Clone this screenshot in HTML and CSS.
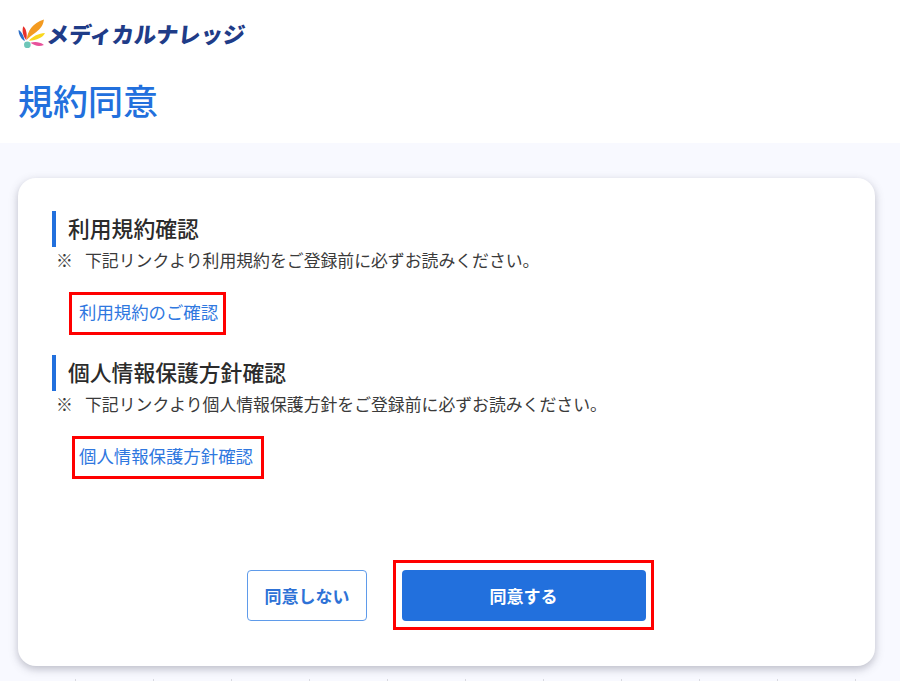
FILE: index.html
```html
<!DOCTYPE html>
<html lang="ja">
<head>
<meta charset="utf-8">
<title>規約同意</title>
<link rel="stylesheet" href="styles.css">
</head>
<body>
<header class="header">
  <div class="logo">
    <svg class="logo-mark" viewBox="0 0 26 28" width="27" height="29" aria-hidden="true">
      <path d="M8.500 20 C9 12 14 4 25 0.500 C24.500 5 23 7 21 9.500 C19 12 14 15 8.500 20Z" fill="#f39a20"/>
      <path d="M10.500 21 C14 16.500 20 14 26 13.500 C24.500 17.500 18 20.500 10.500 21Z" fill="#f9d71c"/>
      <path d="M12 23 C16 21.500 21 22 25 25 C20.500 27 16 26 12 23Z" fill="#e8509a"/>
      <path d="M5 7 C8 9 9 15 8 20.500 C5 17 3.500 12 5 7Z" fill="#e8302a"/>
      <path d="M0.500 10.500 C3 11.500 6 17 6.500 21.500 C3 19 0.500 15 0.500 10.500Z" fill="#2a6cc6"/>
      <circle cx="9" cy="25" r="3.200" fill="#6ec6b8"/>
    </svg>
    <span class="logo-text">メディカルナレッジ</span>
  </div>
  <h1 class="title">規約同意</h1>
</header>
<main class="main">
  <section class="card">
    <div class="block">
      <h2 class="heading">利用規約確認</h2>
      <p class="note"><span class="mark">※</span>下記リンクより利用規約をご登録前に必ずお読みください。</p>
      <div class="link-box link-box-a"><a class="link" href="#">利用規約のご確認</a></div>
    </div>
    <div class="block">
      <h2 class="heading">個人情報保護方針確認</h2>
      <p class="note"><span class="mark">※</span>下記リンクより個人情報保護方針をご登録前に必ずお読みください。</p>
      <div class="link-box link-box-b"><a class="link" href="#">個人情報保護方針確認</a></div>
    </div>
    <div class="actions">
      <button class="btn btn-outline" type="button">同意しない</button>
      <div class="btn-frame"><button class="btn btn-primary" type="button">同意する</button></div>
    </div>
  </section>
</main>
</body>
</html>
```
FILE: styles.css
```css
* { box-sizing: border-box; }
html, body { margin: 0; padding: 0; }
body {
  width: 900px;
  height: 681px;
  overflow: hidden;
  background: #fff;
  font-family: "Noto Sans CJK JP", "Noto Sans", sans-serif;
  color: #333;
}
.header { height: 143px; padding: 19px 0 0 18px; }
.logo { display: flex; align-items: center; height: 28px; gap: 2px; }
.logo-mark { flex: none; }
.logo-text {
  font-size: 22.300px;
  font-weight: 900;
  line-height: 28px;
  letter-spacing: -0.1px;
  color: #1f3c88;
  transform: skewX(-6deg);
}
.title {
  margin: 30px 0 0;
  font-size: 35px;
  font-weight: 500;
  line-height: 46px;
  color: #2270dd;
}
.main {
  height: 538px;
  padding: 35px 25px 0 18px;
  background-color: #f8f9ff;
  background-image: repeating-linear-gradient(90deg, #d9dae0 0 1px, transparent 1px 78px);
  background-size: 100% 2px;
  background-position: 75px 100%;
  background-repeat: no-repeat;
}
.card {
  height: 488px;
  padding: 33px 34px 0;
  background: #fff;
  border-radius: 18px;
  box-shadow: 0 3px 9px rgba(70, 70, 90, 0.34);
}
.block { height: 144px; }
.heading {
  margin: 0;
  height: 36px;
  padding-left: 12px;
  border-left: 4px solid #2270dd;
  font-size: 21.800px;
  font-weight: 500;
  line-height: 34px;
  color: #2b2b2b;
}
.note {
  margin: 0;
  height: 30px;
  padding-left: 4px;
  font-size: 16.850px;
  line-height: 26px;
  color: #3a3a3a;
}
.mark { display: inline-block; width: 29px; }
.link-box {
  display: inline-flex;
  align-items: center;
  height: 43px;
  margin-top: 15px;
  padding-bottom: 4px;
  border: 3px solid #f00;
}
.link-box-a { margin-left: 17px; padding-left: 7px; padding-right: 5px; }
.link-box-b { margin-left: 20px; padding-left: 4px; padding-right: 8px; }
.link {
  font-size: 17.400px;
  line-height: 24px;
  color: #2f78df;
  text-decoration: none;
}
.actions {
  display: flex;
  align-items: center;
  margin-top: 61px;
  padding-left: 195px;
  gap: 26px;
}
.btn {
  height: 51px;
  border-radius: 4px;
  font-family: inherit;
  font-size: 17px;
  font-weight: 700;
  cursor: pointer;
}
.btn-outline {
  width: 120px;
  padding: 0;
  background: #fff;
  border: 1px solid #5f9bea;
  color: #2e72d6;
}
.btn-frame {
  display: flex;
  align-items: center;
  justify-content: center;
  width: 261px;
  height: 70px;
  border: 3px solid #f00;
}
.btn-primary {
  width: 244px;
  padding: 0;
  background: #2270dd;
  border: 0;
  color: #fff;
}
```
